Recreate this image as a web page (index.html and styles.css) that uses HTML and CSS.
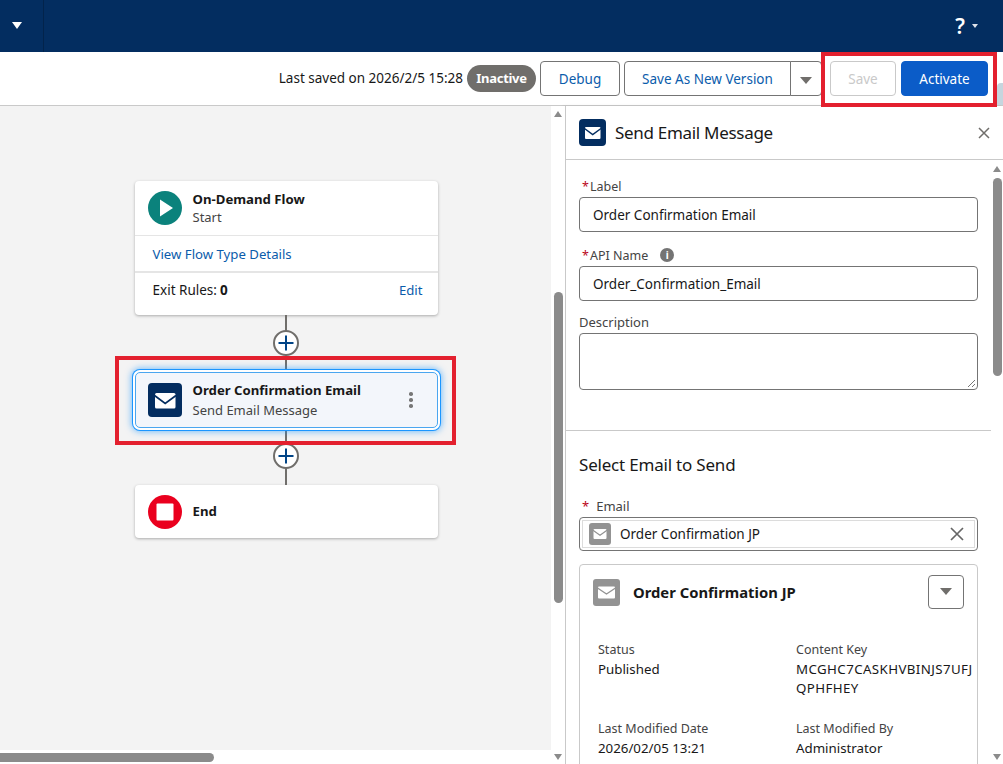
FILE: index.html
```html
<!DOCTYPE html>
<html lang="en">
<head>
    <meta charset="UTF-8">
    <title>Send Email Message</title>
    <link rel="stylesheet" href="styles.css">
</head>
<body>
    <header class="top-bar">
        <div class="app-switch"><span class="caret caret-white"></span></div>
        <div class="help-menu">
            <span class="help-mark">?</span>
            <span class="caret caret-small"></span>
        </div>
    </header>

    <div class="toolbar">
        <span class="saved-text">Last saved on 2026/2/5 15:28</span>
        <span class="status-pill">Inactive</span>
        <button class="btn btn-debug">Debug</button>
        <div class="btn-group">
            <button class="btn btn-version">Save As New Version</button>
            <button class="btn btn-more"><span class="caret caret-gray"></span></button>
        </div>
        <button class="btn btn-save">Save</button>
        <button class="btn btn-activate">Activate</button>
        <div class="mark mark-toolbar"></div>
        <div class="edge-tab"></div>
    </div>

    <main class="workspace">
        <section class="canvas">
            <div class="canvas-area">
                <div class="flow">
                    <div class="node node-start">
                        <div class="node-head">
                            <svg class="node-icon" viewBox="0 0 34 34">
                                <circle cx="17" cy="17" r="17" fill="#0b827c"/>
                                <path d="M12 8.5 L25 17 L12 25.5 Z" fill="#fff"/>
                            </svg>
                            <div class="node-text">
                                <div class="node-title">On-Demand Flow</div>
                                <div class="node-sub">Start</div>
                            </div>
                        </div>
                        <div class="node-row node-link-row"><a class="link">View Flow Type Details</a></div>
                        <div class="node-row node-exit-row">
                            <span>Exit Rules:<b class="exit-count">0</b></span>
                            <a class="link">Edit</a>
                        </div>
                    </div>

                    <div class="connector">
                        <span class="add-step">
                            <svg viewBox="0 0 26 26"><path d="M13 5.5 V20.5 M5.5 13 H20.5" stroke="#014486" stroke-width="2" fill="none"/></svg>
                        </span>
                    </div>

                    <div class="node node-selected">
                        <svg class="node-icon" viewBox="0 0 34 34">
                            <rect width="34" height="34" rx="4" fill="#032d60"/>
                            <rect x="7" y="10" width="20.5" height="15.5" rx="1.5" fill="#fff"/>
                            <path d="M6.5 12.5 L17.2 20.5 L28 12.5" stroke="#032d60" stroke-width="1.7" fill="none"/>
                        </svg>
                        <div class="node-text">
                            <div class="node-title">Order Confirmation Email</div>
                            <div class="node-sub">Send Email Message</div>
                        </div>
                        <span class="node-dots"><i></i><i></i><i></i></span>
                    </div>

                    <div class="connector">
                        <span class="add-step">
                            <svg viewBox="0 0 26 26"><path d="M13 5.5 V20.5 M5.5 13 H20.5" stroke="#014486" stroke-width="2" fill="none"/></svg>
                        </span>
                    </div>

                    <div class="node node-end">
                        <svg class="node-icon" viewBox="0 0 34 34">
                            <circle cx="17" cy="17" r="17" fill="#ea001e"/>
                            <rect x="8.5" y="8.5" width="17" height="17" rx="1" fill="#fff"/>
                        </svg>
                        <div class="node-title">End</div>
                    </div>
                </div>
                <div class="mark mark-node"></div>
            </div>
            <div class="h-scroll"><span class="h-thumb"></span></div>
        </section>

        <div class="v-scroll canvas-scroll">
            <span class="arrow-up"></span>
            <span class="v-thumb"></span>
            <span class="arrow-down"></span>
        </div>

        <aside class="panel">
            <div class="panel-head">
                <svg class="panel-icon" viewBox="0 0 27 27">
                    <rect width="27" height="27" rx="4" fill="#032d60"/>
                    <rect x="6" y="8" width="15.5" height="12" rx="1" fill="#fff"/>
                    <path d="M5.5 9.5 L13.7 15.5 L22 9.5" stroke="#032d60" stroke-width="1.5" fill="none"/>
                </svg>
                <h2 class="panel-title">Send Email Message</h2>
                <svg class="panel-close" viewBox="0 0 12 12"><path d="M1 1 L11 11 M11 1 L1 11" stroke="#706e6b" stroke-width="1.5" fill="none"/></svg>
            </div>
            <div class="panel-main">
                <div class="panel-body">
                    <div class="props">
                        <label class="field-label field-req"><span class="req">*</span>Label</label>
                        <div class="input">Order Confirmation Email</div>
                        <label class="field-label field-req field-api"><span class="req">*</span>API Name<span class="info-dot">i</span></label>
                        <div class="input">Order_Confirmation_Email</div>
                        <label class="field-label field-desc">Description</label>
                        <div class="textarea">
                            <svg class="grip" viewBox="0 0 9 9"><path d="M1 8 L8 1 M5 8 L8 5" stroke="#777" stroke-width="1" fill="none"/></svg>
                        </div>
                    </div>
                    <div class="email-section">
                        <h3 class="section-title">Select Email to Send</h3>
                        <label class="field-label field-req field-email"><span class="req req-email">*</span>Email</label>
                        <div class="lookup">
                            <div class="lookup-inner">
                                <svg class="lookup-icon" viewBox="0 0 22 22">
                                    <rect width="22" height="22" rx="3" fill="#939393"/>
                                    <rect x="4.5" y="6" width="13" height="10" rx="1" fill="#fff"/>
                                    <path d="M4 7.2 L11 12.2 L18 7.2" stroke="#939393" stroke-width="1.2" fill="none"/>
                                </svg>
                                <span class="lookup-name">Order Confirmation JP</span>
                                <svg class="lookup-clear" viewBox="0 0 14 14"><path d="M1 1 L13 13 M13 1 L1 13" stroke="#666" stroke-width="1.7" fill="none"/></svg>
                            </div>
                        </div>
                        <div class="email-card">
                            <div class="card-head">
                                <svg class="panel-icon" viewBox="0 0 27 27">
                                    <rect width="27" height="27" rx="3" fill="#939393"/>
                                    <rect x="5" y="7.5" width="17" height="12" rx="1" fill="#fff"/>
                                    <path d="M4.5 9 L13.5 15 L22.5 9" stroke="#939393" stroke-width="1.3" fill="none"/>
                                </svg>
                                <span class="card-title">Order Confirmation JP</span>
                                <button class="card-menu"><span class="caret caret-gray"></span></button>
                            </div>
                            <dl class="card-grid">
                                <div>
                                    <dt>Status</dt>
                                    <dd>Published</dd>
                                </div>
                                <div>
                                    <dt>Content Key</dt>
                                    <dd class="content-key">MCGHC7CASKHVBINJS7UFJ<br>QPHFHEY</dd>
                                </div>
                                <div>
                                    <dt>Last Modified Date</dt>
                                    <dd>2026/02/05 13:21</dd>
                                </div>
                                <div>
                                    <dt>Last Modified By</dt>
                                    <dd>Administrator</dd>
                                </div>
                            </dl>
                        </div>
                    </div>
                </div>
                <div class="v-scroll panel-scroll">
                    <span class="arrow-up"></span>
                    <span class="v-thumb"></span>
                    <span class="arrow-down"></span>
                </div>
            </div>
        </aside>
    </main>
</body>
</html>
```

FILE: styles.css
```css
* {
    box-sizing: border-box;
}
html, body {
    height: 100%;
}
body {
    margin: 0;
    display: flex;
    flex-direction: column;
    overflow: hidden;
    background: #fff;
    color: #181818;
    font-family: "Noto Sans", sans-serif;
    font-size: 13.5px;
    position: relative;
}
button {
    font-family: inherit;
    font-size: 13.5px;
    cursor: pointer;
}
b, h2, h3, dl, dd {
    margin: 0;
}

/* carets */
.caret {
    display: inline-block;
    width: 0;
    height: 0;
    border-style: solid;
    border-color: transparent;
    border-bottom-width: 0;
}
.caret-white {
    border-width: 7px 5.5px 0;
    border-top-color: #fff;
}
.caret-small {
    border-width: 4px 3.5px 0;
    border-top-color: #dfe3ea;
}
.caret-gray {
    border-width: 7px 6px 0 6px;
    border-top-color: #706e6b;
}

/* top bar */
.top-bar {
    flex: 0 0 52px;
    display: flex;
    justify-content: space-between;
    align-items: center;
    background: #032d60;
}
.app-switch {
    width: 44px;
    height: 100%;
    display: flex;
    align-items: center;
    padding-left: 12px;
    padding-bottom: 1px;
    border-right: 1px solid #02234b;
}
.help-menu {
    display: flex;
    align-items: center;
    gap: 7px;
    padding-right: 25px;
    color: #fff;
}
.help-mark {
    font-size: 21px;
    font-weight: 600;
    line-height: 52px;
}

/* toolbar */
.toolbar {
    flex: 0 0 54px;
    display: flex;
    align-items: flex-start;
    padding: 9px 15px 0 0;
    justify-content: flex-end;
    border-bottom: 1px solid #c9c9c9;
    background: #fff;
}
.saved-text {
    margin-right: 4px;
    line-height: 35px;
}
.status-pill {
    margin: 4px 4px 0 0;
    width: 69px;
    height: 27px;
    line-height: 27px;
    border-radius: 14px;
    background: #706e6b;
    color: #fff;
    font-size: 13px;
    font-weight: 700;
    letter-spacing: -0.3px;
    text-align: center;
}
.btn {
    height: 35px;
    border: 1px solid #747474;
    border-radius: 4px;
    background: #fff;
    color: #0b5cab;
    padding: 0;
}
.btn-debug {
    width: 80px;
    margin-right: 4px;
}
.btn-group {
    display: flex;
    margin-right: 8px;
}
.btn-version {
    width: 167px;
    border-radius: 4px 0 0 4px;
}
.btn-more {
    width: 32px;
    margin-left: -1px;
    border-radius: 0 4px 4px 0;
}
.btn-save {
    width: 66px;
    margin-right: 5px;
    border-color: #c9c9c9;
    color: #c9c9c9;
}
.btn-activate {
    width: 87px;
    border-color: #0b5cc8;
    background: #0b5cc8;
    color: #fff;
}

/* annotation boxes */
.mark {
    position: absolute;
    border: 4px solid #e3202e;
    pointer-events: none;
}
.mark-toolbar {
    left: 821px;
    top: 52px;
    width: 176px;
    height: 55px;
}
.mark-node {
    left: 115px;
    top: 250px;
    width: 341px;
    height: 89px;
}
.edge-tab {
    position: absolute;
    left: 997px;
    top: 83px;
    width: 6px;
    height: 22px;
    border-radius: 4px 0 0 0;
    background: #c5d5de;
}

/* main layout */
.workspace {
    flex: 1;
    display: flex;
    min-height: 0;
}
.canvas {
    width: 551px;
    display: flex;
    flex-direction: column;
    background: #fff;
}
.canvas-area {
    flex: 1;
    background: #f3f3f3;
    padding: 75px 0 0 133px;
    position: relative;
}
.h-scroll {
    flex: 0 0 14px;
    padding-top: 3px;
    width: 551px;
}
.h-thumb {
    display: block;
    width: 214px;
    height: 9px;
    background: #8b8b8b;
    border-radius: 0 5px 5px 0;
}

/* scrollbars */
.v-scroll {
    position: relative;
    background: #fff;
}
.v-thumb {
    position: absolute;
    left: 3px;
    width: 9px;
    background: #8b8b8b;
    border-radius: 5px;
}
.arrow-up, .arrow-down {
    position: absolute;
    left: 3px;
    width: 0;
    height: 0;
    border-style: solid;
    border-color: transparent;
}
.arrow-up {
    top: 5px;
    border-width: 0 4.5px 6px;
    border-bottom-color: #8b8b8b;
}
.arrow-down {
    bottom: 4px;
    border-width: 6px 4.5px 0;
    border-top-color: #8b8b8b;
}
.canvas-scroll {
    flex: 0 0 14px;
}
.canvas-scroll .v-thumb {
    top: 186px;
    height: 311px;
}
.panel-scroll {
    flex: 0 0 12px;
}
.panel-scroll .arrow-up {
    left: 2px;
    top: 6px;
}
.panel-scroll .arrow-down {
    left: 2px;
}
.panel-scroll .v-thumb {
    left: 2px;
    top: 18px;
    height: 198px;
}

/* flow nodes */
.flow {
    width: 306px;
    display: flex;
    flex-direction: column;
    align-items: center;
}
.node {
    width: 303px;
    background: #fff;
    border-radius: 4px;
    box-shadow: 0 1px 3px rgba(0, 0, 0, 0.3);
}
.node-icon {
    flex: 0 0 34px;
    width: 34px;
    height: 34px;
}
.node-title {
    font-size: 13.2px;
    font-weight: 700;
    line-height: 18px;
}
.node-sub {
    color: #444;
    font-size: 13px;
    line-height: 18px;
}
.node-head {
    display: flex;
    gap: 11px;
    align-items: center;
    height: 55px;
    padding: 0 13px 1px;
    border-bottom: 1px solid #e5e5e5;
}
.node-text {
    flex: 1;
}
.node-row {
    display: flex;
    justify-content: space-between;
    padding: 0 15px 0 18px;
}
.node-link-row {
    height: 37px;
    align-items: center;
    border-bottom: 2px solid #e5e5e5;
}
.node-exit-row {
    height: 42px;
    padding-top: 8px;
}
.link {
    color: #0b5cab;
    font-size: 13.2px;
}
.exit-count {
    margin-left: 3px;
}
.connector {
    position: relative;
    width: 2px;
    height: 57px;
    background: #706e6b;
}
.add-step {
    position: absolute;
    left: -12px;
    top: 15px;
    width: 26px;
    height: 26px;
    border: 2px solid #706e6b;
    border-radius: 50%;
    background: #fff;
    display: flex;
    align-items: center;
    justify-content: center;
}
.add-step svg {
    width: 26px;
    height: 26px;
    flex: none;
}
.node-selected {
    position: relative;
    z-index: 1;
    height: 56px;
    display: flex;
    align-items: center;
    gap: 11px;
    padding: 0 24px 0 12px;
    background: #f3f6fb;
    border: 1px solid #4aa6f0;
    border-radius: 5px;
    box-shadow: 0 0 0 2px #fff, 0 0 0 3px #1b96ff, 0 0 6px 4px rgba(27, 150, 255, 0.55);
}
.node-selected .node-sub {
    margin-top: 2px;
}
.node-selected .node-title {
    margin-top: -1px;
}
.node-dots {
    display: flex;
    flex-direction: column;
    gap: 2.5px;
}
.node-dots i {
    width: 3.5px;
    height: 3.5px;
    border-radius: 50%;
    background: #777;
}
.node-end {
    height: 53px;
    display: flex;
    align-items: center;
    gap: 11px;
    padding: 0 13px;
}
.node-end .node-title {
    margin-bottom: 2px;
}

/* right panel */
.panel {
    flex: 1;
    min-width: 0;
    display: flex;
    flex-direction: column;
    border-left: 1px solid #c9c9c9;
    box-shadow: -2px 0 3px rgba(0, 0, 0, 0.08);
    background: #fff;
}
.panel-head {
    flex: 0 0 54px;
    display: flex;
    align-items: center;
    padding: 0 13px;
    border-bottom: 1px solid #c9c9c9;
}
.panel-icon {
    flex: 0 0 27px;
    width: 27px;
    height: 27px;
}
.panel-title {
    flex: 1;
    margin-left: 9px;
    font-size: 17px;
    font-weight: 400;
    letter-spacing: -0.3px;
}
.panel-close {
    width: 12px;
    height: 12px;
}
.panel-main {
    flex: 1;
    min-height: 0;
    display: flex;
}
.panel-body {
    flex: 1;
    min-width: 0;
    overflow: hidden;
}
.props {
    height: 271px;
    padding: 16px 13px 0;
    border-bottom: 1px solid #c9c9c9;
}
.field-label {
    display: block;
    color: #444;
    font-size: 13px;
    line-height: 21px;
}
.field-req {
    font-size: 12.5px;
}
.req {
    color: #ba0517;
    margin: 0 1px 0 3px;
}
.req-email {
    margin-right: 7px;
}
.info-dot {
    display: inline-block;
    width: 14px;
    height: 14px;
    margin-left: 12px;
    border-radius: 50%;
    background: #747474;
    color: #fff;
    font-size: 10px;
    font-weight: 700;
    line-height: 14px;
    text-align: center;
    vertical-align: 1px;
}
.input, .textarea {
    width: 399px;
    border: 1px solid #747474;
    border-radius: 4px;
    background: #fff;
}
.input {
    height: 35px;
    line-height: 35px;
    padding-left: 13px;
}
.field-api {
    margin-top: 14px;
    line-height: 20px;
}
.field-desc {
    margin-top: 11px;
}
.textarea {
    height: 57px;
    position: relative;
}
.grip {
    position: absolute;
    right: 1px;
    bottom: 1px;
    width: 9px;
    height: 9px;
}
.email-section {
    padding: 0 13px;
}
.section-title {
    margin-top: 20px;
    font-size: 17px;
    font-weight: 400;
    line-height: 28px;
    letter-spacing: -0.2px;
}
.field-email {
    margin-top: 17px;
    font-size: 13px;
    line-height: 20px;
}
.lookup {
    width: 399px;
    height: 34px;
    margin-top: 1px;
    padding: 2px;
    border: 1px solid #747474;
    border-radius: 4px;
}
.lookup-inner {
    height: 100%;
    display: flex;
    align-items: center;
    padding: 0 10px 0 6px;
    border: 1px solid #dcdcdc;
}
.lookup-icon {
    width: 22px;
    height: 22px;
}
.lookup-name {
    flex: 1;
    margin-left: 9px;
}
.lookup-clear {
    width: 14px;
    height: 14px;
}
.email-card {
    width: 399px;
    height: 300px;
    margin-top: 13px;
    padding: 10px 13px 0;
    border: 1px solid #c9c9c9;
    border-radius: 4px;
}
.card-head {
    display: flex;
    align-items: center;
    height: 34px;
}
.card-title {
    flex: 1;
    margin-left: 13px;
    font-size: 14.8px;
    font-weight: 700;
}
.card-menu {
    width: 36px;
    height: 34px;
    border: 1px solid #747474;
    border-radius: 4px;
    background: #fff;
    padding: 0 0 4px;
}
.card-grid {
    display: grid;
    grid-template-columns: 198px 1fr;
    row-gap: 21px;
    margin: 31px -6px 0 5px;
}
.card-grid dt {
    color: #444;
    font-size: 12.5px;
    line-height: 20px;
}
.card-grid dd {
    font-size: 13.3px;
    line-height: 19px;
}
.card-grid .content-key {
    letter-spacing: 0.4px;
}
```
